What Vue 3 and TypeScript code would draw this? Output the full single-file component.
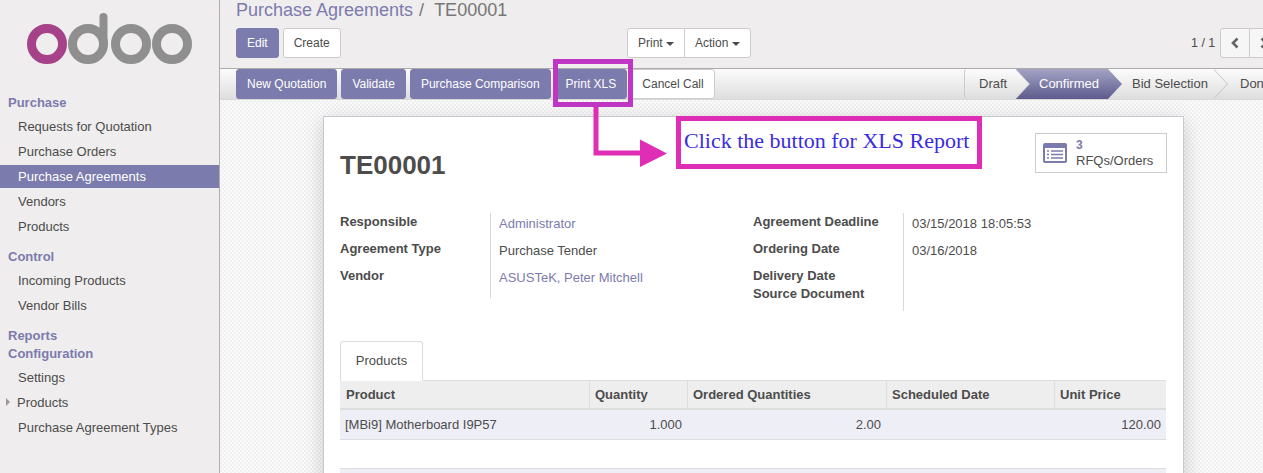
<script setup lang="ts">
interface Group { titles: string[]; items: { label: string; active?: boolean; caret?: boolean }[] }
const groups: Group[] = [
  { titles: ['Purchase'], items: [{ label: 'Requests for Quotation' }, { label: 'Purchase Orders' }, { label: 'Purchase Agreements', active: true }, { label: 'Vendors' }, { label: 'Products' }] },
  { titles: ['Control'], items: [{ label: 'Incoming Products' }, { label: 'Vendor Bills' }] },
  { titles: ['Reports', 'Configuration'], items: [{ label: 'Settings' }, { label: 'Products', caret: true }, { label: 'Purchase Agreement Types' }] },
]
const actions = [
  { label: 'New Quotation', primary: true },
  { label: 'Validate', primary: true },
  { label: 'Purchase Comparison', primary: true },
  { label: 'Print XLS', primary: true },
  { label: 'Cancel Call', primary: false },
]
const columns = [
  { label: 'Product', width: 249 },
  { label: 'Quantity', width: 98 },
  { label: 'Ordered Quantities', width: 199 },
  { label: 'Scheduled Date', width: 168 },
  { label: 'Unit Price', width: 112 },
]
</script>

<template>
  <div class="app">
    <aside class="sidebar">
      <div class="logo">
        <svg width="170" height="60" viewBox="0 0 170 60">
          <circle cx="20" cy="32" r="15.5" fill="none" stroke="#a5428a" stroke-width="9" />
          <circle cx="61" cy="32" r="15.5" fill="none" stroke="#8f8f8f" stroke-width="9" />
          <path d="M76.500 32V5" fill="none" stroke="#8f8f8f" stroke-width="8" stroke-linecap="round" />
          <circle cx="104" cy="32" r="15.5" fill="none" stroke="#8f8f8f" stroke-width="9" />
          <circle cx="145" cy="32" r="15.5" fill="none" stroke="#8f8f8f" stroke-width="9" />
        </svg>
      </div>
      <nav v-for="g in groups" :key="g.titles[0]" class="group">
        <div v-for="t in g.titles" :key="t" class="group-title">{{ t }}</div>
        <ul class="menu">
          <li v-for="i in g.items" :key="i.label" class="menu-item" :class="{ active: i.active, 'has-caret': i.caret }">
            <span v-if="i.caret" class="caret-right"></span>{{ i.label }}
          </li>
        </ul>
      </nav>
    </aside>

    <main class="main">
      <header class="control">
        <div class="crumbs"><span class="crumb-link">Purchase Agreements</span><span class="crumb-sep">/</span><span class="crumb-cur">TE00001</span></div>
        <div class="control-row">
          <div class="left-btns">
            <button class="btn primary">Edit</button>
            <button class="btn">Create</button>
          </div>
          <div class="mid-btns">
            <button class="btn joined-l">Print <i class="down"></i></button>
            <button class="btn joined-r">Action <i class="down"></i></button>
          </div>
          <div class="pager">
            <span class="pager-text">1 / 1</span>
            <div class="pager-btns">
              <button class="btn pager-btn">
                <svg width="10" height="12" viewBox="0 0 10 12"><path d="M7.500 1.500 3 6l4.500 4.500" fill="none" stroke="#666" stroke-width="2.600" /></svg>
              </button>
              <button class="btn pager-btn">
                <svg width="10" height="12" viewBox="0 0 10 12"><path d="M2.500 1.500 7 6l-4.500 4.500" fill="none" stroke="#666" stroke-width="2.600" /></svg>
              </button>
            </div>
          </div>
        </div>
      </header>

      <div class="statusbar">
        <div class="actions">
          <button v-for="a in actions" :key="a.label" class="btn action" :class="{ primary: a.primary }">{{ a.label }}</button>
        </div>
        <div class="stages">
          <div class="stage first">Draft</div>
          <div class="stage current">Confirmed</div>
          <div class="stage third">Bid Selection</div>
          <div class="stage last">Done</div>
        </div>
      </div>

      <div class="canvas">
        <section class="sheet">
          <div class="title-row">
            <h1 class="title">TE00001</h1>
            <button class="stat">
              <svg width="24" height="20" viewBox="0 0 24 20">
                <rect width="24" height="20" rx="2" fill="#7c7bad" />
                <rect x="2" y="5" width="20" height="13" fill="#fff" />
                <path d="M4 8h2M8 8h12M4 11.500h2M8 11.500h12M4 15h2M8 15h12" stroke="#7c7bad" stroke-width="1.600" />
              </svg>
              <span class="stat-text"><b>3</b><span>RFQs/Orders</span></span>
            </button>
          </div>

          <div class="fields">
            <div class="field-col col-left">
              <div class="labels">
                <div class="flabel">Responsible</div>
                <div class="flabel">Agreement Type</div>
                <div class="flabel">Vendor</div>
              </div>
              <div class="values">
                <div class="fval link">Administrator</div>
                <div class="fval">Purchase Tender</div>
                <div class="fval link">ASUSTeK, Peter Mitchell</div>
              </div>
            </div>
            <div class="field-col col-right">
              <div class="labels">
                <div class="flabel">Agreement Deadline</div>
                <div class="flabel">Ordering Date</div>
                <div class="flabel tight">Delivery Date</div>
                <div class="flabel tight">Source Document</div>
              </div>
              <div class="values">
                <div class="fval">03/15/2018 18:05:53</div>
                <div class="fval">03/16/2018</div>
              </div>
            </div>
          </div>

          <div class="tabs"><div class="tab">Products</div></div>
          <table class="grid">
            <colgroup><col v-for="c in columns" :key="c.label" :style="{ width: c.width + 'px' }" /></colgroup>
            <thead>
              <tr><th v-for="c in columns" :key="c.label">{{ c.label }}</th></tr>
            </thead>
            <tbody>
              <tr>
                <td>[MBi9] Motherboard I9P57</td>
                <td class="num">1.000</td>
                <td class="num">2.00</td>
                <td></td>
                <td class="num">120.00</td>
              </tr>
            </tbody>
          </table>
          <div class="grid-foot"></div>
        </section>
      </div>
    </main>

    <div class="mark-box"></div>
    <svg class="mark-arrow" width="80" height="65" viewBox="0 0 80 65">
      <path d="M6 0V46H52" fill="none" stroke="#e02db5" stroke-width="5" />
      <path d="M50 32.500 L77 46.500 L50 60 Z" fill="#e02db5" />
    </svg>
    <div class="note">Click the button for XLS Report</div>
  </div>
</template>

<style>
html, body { margin: 0; overflow: hidden; }
</style>

<style scoped>
* { box-sizing: border-box; }
.app {
  position: relative;
  display: flex;
  width: 1263px;
  height: 473px;
  overflow: hidden;
  font-family: "Liberation Sans", Arial, sans-serif;
  font-size: 13px;
  color: #4c4c4c;
  background: #efeded;
}
.sidebar {
  flex: 0 0 220px;
  border-right: 1px solid #aeaeae;
  background: #efeded;
}
.logo { height: 94px; padding: 12px 0 0 27px; }
.logo svg { display: block; }
.group { margin-bottom: 10px; }
.group-title {
  height: 18px;
  line-height: 18px;
  padding-left: 8px;
  font-weight: 700;
  color: #7c7bad;
}
.menu { list-style: none; margin: 3px 0 0; padding: 0; }
.menu-item {
  position: relative;
  height: 23px;
  line-height: 23px;
  margin-bottom: 2px;
  padding-left: 18px;
  color: #4c4c4c;
}
.menu-item.has-caret { padding-left: 17px; }
.menu-item.active { background: #7c7bad; color: #fff; }
.caret-right {
  position: absolute;
  left: 6px;
  top: 7px;
  border-left: 4px solid #999;
  border-top: 4px solid transparent;
  border-bottom: 4px solid transparent;
}
.main { flex: 1; min-width: 0; display: flex; flex-direction: column; }
.control { height: 68px; padding: 0 0 0 16px; background: #efeded; }
.crumbs { height: 28px; font-size: 18px; line-height: 20px; white-space: nowrap; }
.crumb-link { color: #7c7bad; }
.crumb-sep { color: #777; margin: 0 10px 0 6px; }
.crumb-cur { color: #777; }
.control-row { display: flex; align-items: flex-start; }
.left-btns { display: flex; flex: none; gap: 4px; width: 391px; }
.mid-btns { display: flex; flex: none; width: 564px; }
.btn {
  height: 30px;
  padding: 0 10px;
  border: 1px solid #ccc;
  border-radius: 3px;
  background: #fff;
  color: #4c4c4c;
  font-family: inherit;
  font-size: 12px;
  line-height: 1;
  white-space: nowrap;
}
.btn.primary {
  background: #7c7bad;
  border-color: #7c7bad;
  color: #fff;
}
.joined-l { border-radius: 3px 0 0 3px; }
.joined-r { border-radius: 0 3px 3px 0; margin-left: -1px; }
.down {
  display: inline-block;
  vertical-align: middle;
  border-top: 4px solid #4c4c4c;
  border-left: 4px solid transparent;
  border-right: 4px solid transparent;
}
.pager { display: flex; align-items: center; gap: 4px; height: 30px; flex: none; }
.pager-text { width: 25px; font-size: 12.5px; white-space: nowrap; }
.pager-btns { display: flex; }
.pager-btn {
  width: 30px;
  padding: 0;
  display: flex;
  align-items: center;
  justify-content: center;
  background: #f6f6f6;
  border-radius: 3px 0 0 3px;
}
.pager-btn + .pager-btn { margin-left: -1px; border-radius: 0 3px 3px 0; }
.statusbar {
  display: flex;
  justify-content: space-between;
  height: 32px;
  padding-left: 16px;
  border-top: 1px solid #ababab;
  border-bottom: 1px solid #d8d8d8;
  background: linear-gradient(#fcfcfc, #dedede);
  overflow: hidden;
}
.actions { display: flex; gap: 4px; }
.action { height: 30px; padding: 0 10px; }
.stages { display: flex; flex: none; width: 299px; }
.stage {
  position: relative;
  height: 30px;
  line-height: 30px;
  font-size: 13px;
  white-space: nowrap;
  padding-left: 24px;
  color: #4c4c4c;
}
.stage::before, .stage::after {
  content: "";
  position: absolute;
  top: 0;
  height: 30px;
  width: 14px;
  clip-path: polygon(0 0, 100% 50%, 0 100%);
}
.stage::before { right: -14px; background: #c4c4c4; }
.stage::after { right: -13px; background: linear-gradient(#fcfcfc, #dedede); }
.stage.first {
  z-index: 3;
  flex: 0 0 52px;
  padding-left: 14px;
  border-left: 1px solid #ccc;
  border-radius: 3px 0 0 3px;
}
.stage.current {
  z-index: 2;
  flex: 0 0 92px;
  padding-left: 23px;
  color: #fff;
  background: linear-gradient(#a4a3c4, #5c5b8d);
}
.stage.current::before, .stage.current::after { background: linear-gradient(#a4a3c4, #5c5b8d); }
.stage.third { z-index: 1; flex: 0 0 106px; }
.stage.last { flex: 0 0 60px; padding-left: 26px; }
.stage.last::before, .stage.last::after { display: none; }
.canvas {
  flex: 1;
  min-height: 0;
  padding: 16px 0 0 103px;
  background-color: #fbfbfb;
  background-image: conic-gradient(#f0f0f0 25%, transparent 0 50%, #f0f0f0 0 75%, transparent 0);
  background-size: 4px 4px;
}
.sheet {
  width: 861px;
  height: 420px;
  padding: 0 16px;
  background: #fff;
  border: 1px solid #c8c8d0;
  box-shadow: 0 5px 20px -1px rgba(0, 0, 0, 0.2);
}
.title-row {
  display: flex;
  justify-content: space-between;
  align-items: flex-start;
  height: 96px;
}
.title {
  margin: 33px 0 0;
  font-size: 26px;
  line-height: 30px;
  font-weight: 700;
  color: #4c4c4c;
}
.stat {
  display: flex;
  align-items: center;
  gap: 9px;
  width: 132px;
  height: 40px;
  margin-top: 16px;
  padding: 0 0 0 7px;
  background: #fff;
  border: 1px solid #ccc;
  font-family: inherit;
  color: #4c4c4c;
  text-align: left;
}
.stat svg { flex: none; }
.stat-text { display: flex; flex-direction: column; font-size: 13px; line-height: 15px; }
.stat-text b { font-size: 12px; color: #7c7bad; }
.fields { display: flex; height: 128px; }
.field-col { display: flex; }
.col-left { width: 413px; }
.labels { font-weight: 700; width: 150px; }
.values {
  padding: 2px 0 0 8px;
  border-left: 1px solid #d8d8d8;
  height: 85px;
}
.col-right .values { height: 98px; }
.flabel, .fval { height: 27px; line-height: 18px; white-space: nowrap; }
.flabel.tight { height: 18px; }
.link { color: #7c7bad; }
.tabs { display: flex; height: 39px; }
.tab {
  width: 83px;
  height: 40px;
  line-height: 38px;
  text-align: center;
  border: 1px solid #ddd;
  border-bottom: 0;
  border-radius: 3px 3px 0 0;
  background: #fff;
  position: relative;
  z-index: 1;
}
.grid {
  width: 826px;
  table-layout: fixed;
  border-collapse: separate;
  border-spacing: 0;
}
.grid th {
  height: 30px;
  padding: 0 5px;
  text-align: left;
  font-weight: 700;
  background: #eee;
  border-top: 1px solid #ddd;
  border-left: 1px solid #ddd;
  border-bottom: 2px solid #ddd;
}
.grid th:first-child { border-left: 0; padding-left: 6px; }
.grid td {
  height: 30px;
  padding: 0 5px;
  background: #eeeef6;
  border-bottom: 1px solid #ddd;
  white-space: nowrap;
}
.grid td.num { text-align: right; }
.grid-foot {
  width: 826px;
  height: 20px;
  margin-top: 28px;
  background: #eeeef6;
  border-top: 1px solid #ddd;
}
.mark-box {
  position: absolute;
  left: 553px;
  top: 59px;
  width: 80px;
  height: 48px;
  border: 5px solid #bf35c4;
}
.mark-arrow { position: absolute; left: 590px; top: 107px; }
.note {
  position: absolute;
  left: 676px;
  top: 116px;
  width: 306px;
  height: 53px;
  padding-left: 3px;
  border: 5px solid #e02db5;
  background: #fff;
  color: #3a2be0;
  font-family: "Liberation Serif", "Times New Roman", serif;
  font-size: 22px;
  line-height: 40px;
  white-space: nowrap;
}
.left-btns { width: 391px; }
.mid-btns { width: 564px; }
</style>
